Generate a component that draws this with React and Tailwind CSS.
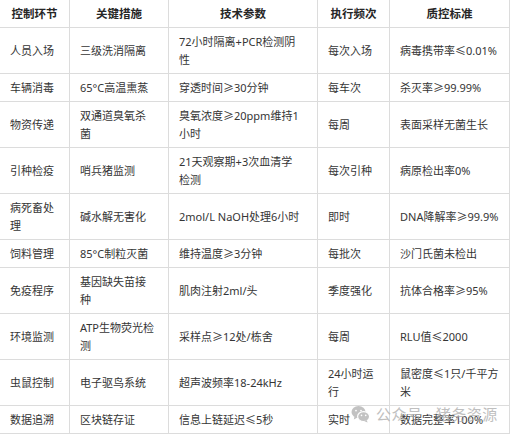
import React from 'react'

const headers = ['控制环节', '关键措施', '技术参数', '执行频次', '质控标准']

// each cell keeps the line breaks that the table shows
const rows = [
  ['人员入场', '三级洗消隔离', '72小时隔离+PCR检测阴\n性', '每次入场', '病毒携带率≤0.01%'],
  ['车辆消毒', '65°C高温熏蒸', '穿透时间≥30分钟', '每车次', '杀灭率≥99.99%'],
  ['物资传递', '双通道臭氧杀\n菌', '臭氧浓度≥20ppm维持1\n小时', '每周', '表面采样无菌生长'],
  ['引种检疫', '哨兵猪监测', '21天观察期+3次血清学\n检测', '每次引种', '病原检出率0%'],
  ['病死畜处\n理', '碱水解无害化', '2mol/L NaOH处理6小时', '即时', 'DNA降解率≥99.9%'],
  ['饲料管理', '85°C制粒灭菌', '维持温度≥3分钟', '每批次', '沙门氏菌未检出'],
  ['免疫程序', '基因缺失苗接\n种', '肌肉注射2ml/头', '季度强化', '抗体合格率≥95%'],
  ['环境监测', 'ATP生物荧光检\n测', '采样点≥12处/栋舍', '每周', 'RLU值≤2000'],
  ['虫鼠控制', '电子驱鸟系统', '超声波频率18-24kHz', '24小时运\n行', '鼠密度≤1只/千平方\n米'],
  ['数据追溯', '区块链存证', '信息上链延迟≤5秒', '实时', '数据完整率100%'],
]

function WeChatIcon() {
  return (
    <svg width="19" height="18" viewBox="0 0 19 18">
      <ellipse cx="7.5" cy="7" rx="7" ry="6" fill="#b4b4b4" />
      <path d="M3.5 11.5 L2.8 14.5 L6.5 12.4 Z" fill="#b4b4b4" />
      <circle cx="5" cy="5.6" r="0.9" fill="#fff" />
      <circle cx="10" cy="5.6" r="0.9" fill="#fff" />
      <ellipse cx="12.6" cy="11.6" rx="6" ry="5" fill="#b4b4b4" stroke="#fff" strokeWidth="1.2" />
      <path d="M15.6 15 L16.6 17.6 L13.4 16.2 Z" fill="#b4b4b4" />
      <circle cx="10.5" cy="10.4" r="0.8" fill="#fff" />
      <circle cx="14.7" cy="10.4" r="0.8" fill="#fff" />
    </svg>
  )
}

export default function App() {
  return (
    <div
      className="relative w-[512px] h-[436px] overflow-hidden bg-white"
      style={{ fontFamily: '"Noto Sans", "Noto Sans CJK SC", sans-serif' }}
    >
      <table className="table-fixed border-collapse w-[510px] -mt-px -ml-px">
        <colgroup>
          <col className="w-[70px]" />
          <col className="w-[99px]" />
          <col className="w-[149px]" />
          <col className="w-[72px]" />
          <col className="w-[120px]" />
        </colgroup>
        <thead>
          <tr>
            {headers.map((h) => (
              <th
                key={h}
                className="border border-[#dcdcdc] px-[10px] py-[4.5px] text-center text-[11.5px] leading-[18px] font-bold text-[#262626]"
              >
                {h}
              </th>
            ))}
          </tr>
        </thead>
        <tbody>
          {rows.map((row, i) => (
            <tr key={i}>
              {row.map((cell, j) => (
                <td
                  key={j}
                  className="border border-[#dcdcdc] px-[10px] py-[4.5px] text-left align-middle text-[11px] leading-[18px] text-[#353535] whitespace-pre-line"
                >
                  {cell}
                </td>
              ))}
            </tr>
          ))}
        </tbody>
      </table>

      {/* watermark */}
      <div className="absolute left-[351px] top-[405px] flex items-center gap-[6px] opacity-80 pointer-events-none">
        <WeChatIcon />
        <span className="text-[15px] leading-[18px] text-[#b0b0b0] tracking-[0.5px]">
          公众号 · 猪务资源
        </span>
      </div>
    </div>
  )
}
